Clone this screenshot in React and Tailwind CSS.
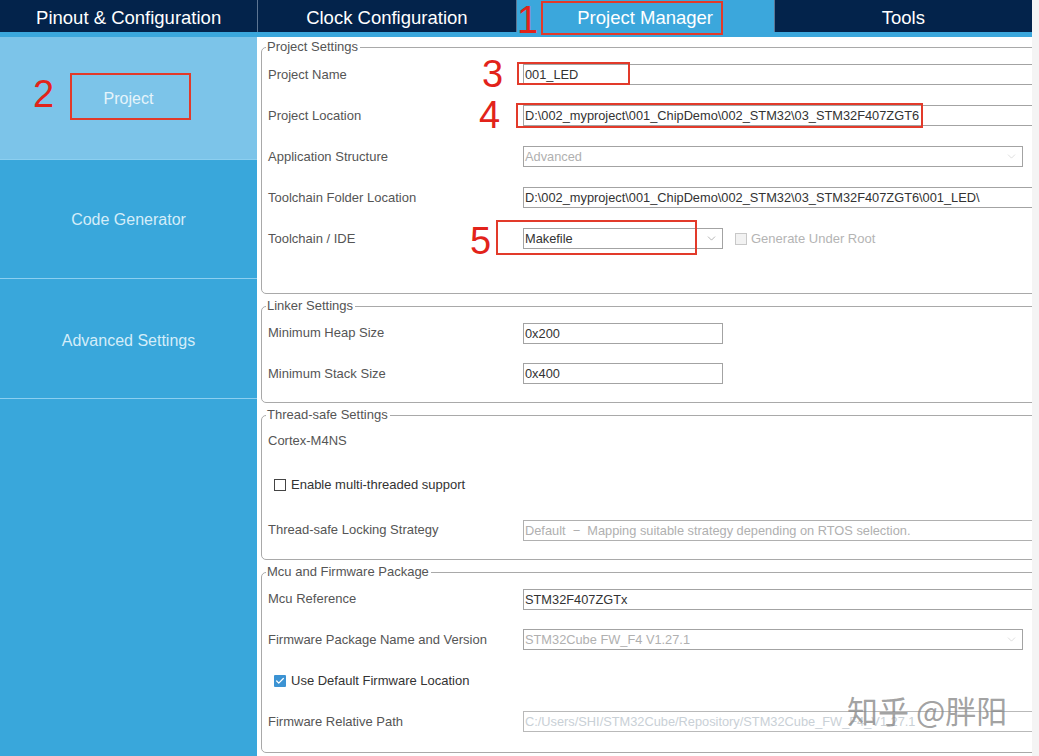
import React from 'react'
import { ChevronDown, Check } from 'lucide-react'

const TABS = ['Pinout & Configuration', 'Clock Configuration', 'Project Manager', 'Tools']

function Row({ label, children, h = 'h-[41px]' }) {
  return (
    <div className={`flex items-center pl-[2px] ${h}`}>
      <span className="w-[255px] shrink-0 text-[13px] text-[#555]">{label}</span>
      {children}
    </div>
  )
}

function TextBox({ value, disabled, faint, w = 'w-[540px]' }) {
  const tone = faint ? 'text-[#c9d0d6] border-[#b9b9b9]' : disabled ? 'text-[#b0b0b0] border-[#b0b0b0]' : 'text-[#333] border-[#a3a3a3]'
  return (
    <div className={`h-[21px] shrink-0 border px-[1px] text-[12.8px] leading-[19px] whitespace-pre ${w} ${tone}`}>
      {value}
    </div>
  )
}

function Select({ value, disabled, w = 'w-[500px]' }) {
  return (
    <div className={`flex h-[21px] shrink-0 items-center justify-between border border-[#a3a3a3] pl-[1px] pr-[4px] text-[12.8px] ${w} ${disabled ? 'text-[#b0b0b0]' : 'text-[#333]'}`}>
      <span>{value}</span>
      <ChevronDown size={13} strokeWidth={1} className={disabled ? 'text-[#c4c4c4]' : 'text-[#777]'} />
    </div>
  )
}

function Box({ checked, disabled }) {
  if (checked) {
    return (
      <span className="flex h-[12px] w-[12px] items-center justify-center rounded-[1px] bg-[#3c93d3]">
        <Check size={10} strokeWidth={3} className="text-white" />
      </span>
    )
  }
  return <span className={`h-[12px] w-[12px] border ${disabled ? 'border-[#c8c8c8] bg-[#f2f2f2]' : 'border-[#444] bg-white'}`} />
}

function Group({ title, children, pb }) {
  return (
    <fieldset className={`w-[800px] rounded-[5px] border border-[#a9a9a9] px-[4px] ${pb}`}>
      <legend className="pl-[1px] pr-[2px] text-[13px] leading-[14px] text-[#555]">{title}</legend>
      {children}
    </fieldset>
  )
}

function Mark({ n, className }) {
  return <span className={`pointer-events-none absolute text-[38px] leading-none text-[#e2231a] ${className}`}>{n}</span>
}

export default function App() {
  return (
    <div className="relative flex h-[756px] w-[1039px] overflow-hidden bg-white font-['Liberation_Sans',Arial,sans-serif]">
      <div className="flex w-[1032px] flex-col">
        {/* top tabs */}
        <div className="flex h-[32px] bg-[#03234b]">
          {TABS.map((t, i) => (
            <div
              key={t}
              className={`flex flex-1 items-center justify-center pt-[3px] text-[18.5px] text-white ${i === 2 ? 'bg-[#3ba7dc]' : ''} ${i > 0 ? 'border-l border-[#5d7592]' : ''}`}
            >
              {t}
            </div>
          ))}
        </div>
        <div className="h-[5px] bg-[#3ba7dc]" />

        <div className="flex flex-1">
          {/* side menu */}
          <div className="flex w-[257px] shrink-0 flex-col bg-[#39a7db]">
            <div className="flex h-[122px] items-center justify-center pt-[2px] bg-[#7cc4e9] text-[16px] text-[#e6f4fb]">Project</div>
            <div className="flex h-[119px] items-center justify-center pt-[2px] border-t border-[#8ccff0] text-[16px] text-[#d4edf9]">Code Generator</div>
            <div className="flex h-[121px] items-center justify-center pt-[4px] border-y border-[#8ccff0] text-[16px] text-[#d4edf9]">Advanced Settings</div>
          </div>

          {/* settings */}
          <div className="flex flex-1 flex-col gap-[5px] overflow-hidden pl-[4px] pt-[3px]">
            <Group title="Project Settings" pb="pb-[34px]">
              <Row label="Project Name"><TextBox value="001_LED" /></Row>
              <Row label="Project Location"><TextBox value="D:\002_myproject\001_ChipDemo\002_STM32\03_STM32F407ZGT6" /></Row>
              <Row label="Application Structure"><Select value="Advanced" disabled /></Row>
              <Row label="Toolchain Folder Location"><TextBox value="D:\002_myproject\001_ChipDemo\002_STM32\03_STM32F407ZGT6\001_LED\" /></Row>
              <Row label="Toolchain / IDE">
                <Select value="Makefile" w="w-[200px]" />
                <span className="ml-[12px] flex items-center gap-[4px] text-[13px] text-[#b4b4b4]">
                  <Box disabled />
                  Generate Under Root
                </span>
              </Row>
            </Group>

            <Group title="Linker Settings" pb="pb-[8px]">
              <Row label="Minimum Heap Size" h="h-[40px]"><TextBox value="0x200" w="w-[200px]" /></Row>
              <Row label="Minimum Stack Size"><TextBox value="0x400" w="w-[200px]" /></Row>
            </Group>

            <Group title="Thread-safe Settings" pb="pb-[9px]">
              <Row label="Cortex-M4NS" h="h-[38px]" />
              <div className="flex h-[50px] items-center gap-[5px] pl-[8px] text-[13px] text-[#333]">
                <Box />
                Enable multi-threaded support
              </div>
              <Row label="Thread-safe Locking Strategy" h="h-[40px]">
                <TextBox value="Default  −  Mapping suitable strategy depending on RTOS selection." disabled />
              </Row>
            </Group>

            <Group title="Mcu and Firmware Package" pb="pb-[10px]">
              <Row label="Mcu Reference" h="h-[40px]"><TextBox value="STM32F407ZGTx" /></Row>
              <Row label="Firmware Package Name and Version"><Select value="STM32Cube FW_F4 V1.27.1" disabled /></Row>
              <div className="flex h-[41px] items-center gap-[5px] pl-[8px] text-[13px] text-[#333]">
                <Box checked />
                Use Default Firmware Location
              </div>
              <Row label="Firmware Relative Path">
                <TextBox value="C:/Users/SHI/STM32Cube/Repository/STM32Cube_FW_F4_V1.27.1" faint />
              </Row>
            </Group>
          </div>
        </div>
      </div>
      <div className="flex-1 bg-[#f4f4f4]" />

      {/* red callouts */}
      <Mark n="1" className="left-[517px] top-[1px]" />
      <div className="pointer-events-none absolute left-[541px] top-[1px] h-[34px] w-[182px] border-2 border-[#e23a2a]" />
      <Mark n="2" className="left-[33px] top-[75px]" />
      <div className="pointer-events-none absolute left-[70px] top-[73px] h-[47px] w-[121px] border-2 border-[#e23a2a]" />
      <Mark n="3" className="left-[482px] top-[55px]" />
      <div className="pointer-events-none absolute left-[517px] top-[62px] h-[23px] w-[113px] border-2 border-[#e23a2a]" />
      <Mark n="4" className="left-[479px] top-[96px]" />
      <div className="pointer-events-none absolute left-[516px] top-[103px] h-[25px] w-[407px] border-2 border-[#e23a2a]" />
      <Mark n="5" className="left-[470px] top-[222px]" />
      <div className="pointer-events-none absolute left-[496px] top-[220px] h-[35px] w-[201px] border-2 border-[#e23a2a]" />

      <span className="pointer-events-none absolute left-[847px] top-[694px] font-['Noto_Sans_CJK_SC',sans-serif] text-[31px] leading-none text-[#8a8a8a]/80">
        知乎 @胖阳
      </span>
    </div>
  )
}
